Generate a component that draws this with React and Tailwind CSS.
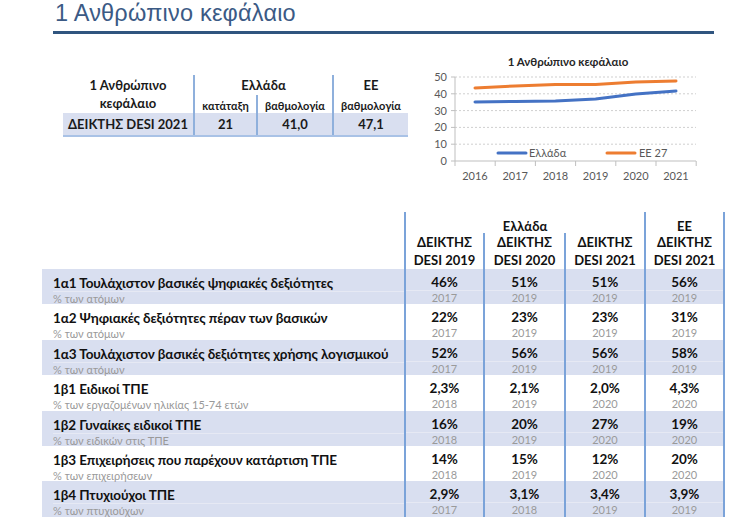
import React from "react";

const rows = [
  {
    title: "1α1 Τουλάχιστον βασικές ψηφιακές δεξιότητες",
    sub: "% των ατόμων",
    vals: [["46%", "2017"], ["51%", "2019"], ["51%", "2019"], ["56%", "2019"]],
  },
  {
    title: "1α2 Ψηφιακές δεξιότητες πέραν των βασικών",
    sub: "% των ατόμων",
    vals: [["22%", "2017"], ["23%", "2019"], ["23%", "2019"], ["31%", "2019"]],
  },
  {
    title: "1α3 Τουλάχιστον βασικές δεξιότητες χρήσης λογισμικού",
    sub: "% των ατόμων",
    vals: [["52%", "2017"], ["56%", "2019"], ["56%", "2019"], ["58%", "2019"]],
  },
  {
    title: "1β1 Ειδικοί ΤΠΕ",
    sub: "% των εργαζομένων ηλικίας 15-74 ετών",
    vals: [["2,3%", "2018"], ["2,1%", "2019"], ["2,0%", "2020"], ["4,3%", "2020"]],
  },
  {
    title: "1β2 Γυναίκες ειδικοί ΤΠΕ",
    sub: "% των ειδικών στις ΤΠΕ",
    vals: [["16%", "2018"], ["20%", "2019"], ["27%", "2020"], ["19%", "2020"]],
  },
  {
    title: "1β3 Επιχειρήσεις που παρέχουν κατάρτιση ΤΠΕ",
    sub: "% των επιχειρήσεων",
    vals: [["14%", "2018"], ["15%", "2019"], ["12%", "2020"], ["20%", "2020"]],
  },
  {
    title: "1β4 Πτυχιούχοι ΤΠΕ",
    sub: "% των πτυχιούχων",
    vals: [["2,9%", "2017"], ["3,1%", "2018"], ["3,4%", "2019"], ["3,9%", "2019"]],
  },
];

const years = ["2016", "2017", "2018", "2019", "2020", "2021"];
const greece = [102, 101.5, 101, 99, 94, 91];
const eu = [88, 86, 84.5, 84.5, 82, 81];
const cx = (i) => 475 + i * 40.2;

const toPath = (ys) =>
  ys.map((y, i) => `${i === 0 ? "M" : "L"}${cx(i)} ${y}`).join(" ");

const Chart = () => {
  const grid = [0, 10, 20, 30, 40, 50];
  return (
    <svg width="330" height="150" viewBox="420 45 330 150" className="block">
      <text
        x="568"
        y="66"
        textAnchor="middle"
        fontSize="11.5"
        fontWeight="700"
        fill="#262626"
        fontFamily="Lato, sans-serif"
      >
        1 Ανθρώπινο κεφάλαιο
      </text>
      {grid.map((v) => {
        const y = 161 - v * 1.68;
        return (
          <g key={v}>
            <line
              x1="455"
              x2="696"
              y1={y}
              y2={y}
              stroke={v === 0 ? "#bfbfbf" : "#cfcfcf"}
              strokeDasharray={v === 0 ? "" : "2 2"}
            />
            <line x1="451" x2="455" y1={y} y2={y} stroke="#bfbfbf" />
            <text
              x="447"
              y={y + 4}
              textAnchor="end"
              fontSize="11"
              fill="#595959"
              fontFamily="Lato, sans-serif"
            >
              {v}
            </text>
          </g>
        );
      })}
      <line x1="455" x2="455" y1="77" y2="161" stroke="#bfbfbf" />
      {[0, 1, 2, 3, 4, 5, 6].map((i) => (
        <line
          key={i}
          x1={455 + i * 40.2}
          x2={455 + i * 40.2}
          y1="161"
          y2="166"
          stroke="#bfbfbf"
        />
      ))}
      {years.map((y, i) => (
        <text
          key={y}
          x={cx(i)}
          y="180"
          textAnchor="middle"
          fontSize="11"
          fill="#595959"
          fontFamily="Lato, sans-serif"
        >
          {y}
        </text>
      ))}
      <path d={toPath(eu)} fill="none" stroke="#ed7d31" strokeWidth="3" strokeLinecap="round" strokeLinejoin="round" />
      <path d={toPath(greece)} fill="none" stroke="#4472c4" strokeWidth="3" strokeLinecap="round" strokeLinejoin="round" />
      <line x1="498" x2="526" y1="153" y2="153" stroke="#4472c4" strokeWidth="3" strokeLinecap="round" />
      <text x="529" y="157" fontSize="11" fill="#595959" fontFamily="Lato, sans-serif">
        Ελλάδα
      </text>
      <line x1="607" x2="635" y1="153" y2="153" stroke="#ed7d31" strokeWidth="3" strokeLinecap="round" />
      <text x="639" y="157" fontSize="11" fill="#595959" fontFamily="Lato, sans-serif">
        EE 27
      </text>
    </svg>
  );
};

const SmallTable = () => (
  <div className="grid grid-cols-[130px_63px_76px_76px] grid-rows-[20px_18px_24px] text-[#1a1a1a] font-bold">
    <div className="row-span-2 flex flex-col items-center pt-[1px] text-[13px] leading-[18px]">
      <span>1 Ανθρώπινο</span>
      <span>κεφάλαιο</span>
    </div>
    <div className="col-span-2 border-l-2 border-[#8fb0dc] text-center text-[13px] leading-[20px]">
      Ελλάδα
    </div>
    <div className="border-l-2 border-[#8fb0dc] text-center text-[13px] leading-[20px]">EE</div>
    <div className="border-l-2 border-[#8fb0dc] text-center text-[11px] leading-[18px] pt-[2px]">κατάταξη</div>
    <div className="border-l-2 border-[#8fb0dc] text-center text-[11px] leading-[18px] pt-[2px]">βαθμολογία</div>
    <div className="border-l-2 border-[#8fb0dc] text-center text-[11px] leading-[18px] pt-[2px]">βαθμολογία</div>
    <div className="col-span-4 grid grid-cols-[130px_63px_76px_76px] bg-[#d9dff0] border-b-2 border-[#a9c2e6] text-[13px] leading-[22px]">
      <div className="text-center">ΔΕΙΚΤΗΣ DESI 2021</div>
      <div className="border-l-2 border-[#8fb0dc] text-center">21</div>
      <div className="border-l-2 border-[#8fb0dc] text-center">41,0</div>
      <div className="border-l-2 border-[#8fb0dc] text-center">47,1</div>
    </div>
  </div>
);

const colLine = "border-l-2 border-[#7ba3d9]";

const MainTable = () => (
  <div className="w-[683px] text-[#111]">
    <div className="grid grid-cols-[362px_79px_81px_80px_81px] grid-rows-[21px_36px] font-bold text-[13px]">
      <div className="row-span-2" />
      <div className={`col-span-3 ${colLine} text-center leading-[18px] pt-[5px]`}>Ελλάδα</div>
      <div className={`${colLine} border-r-2 text-center leading-[18px] pt-[5px]`}>EE</div>
      {["DESI 2019", "DESI 2020", "DESI 2021", "DESI 2021"].map((t, i) => (
        <div
          key={i}
          className={`${colLine} ${i === 3 ? "border-r-2" : ""} flex flex-col items-center leading-[17.5px] pt-[1px]`}
        >
          <span>ΔΕΙΚΤΗΣ</span>
          <span>{t}</span>
        </div>
      ))}
    </div>
    {rows.map((r, ri) => {
      const shaded = ri % 2 === 0;
      const sep = shaded ? "border-[#e6e9f4]" : "border-transparent";
      return (
        <div
          key={ri}
          className={`grid grid-cols-[362px_79px_81px_80px_81px] h-[35.4px] ${shaded ? "bg-[#d9dff0]" : "bg-white"}`}
        >
          <div className="flex flex-col pl-[11px]">
            <div className="pt-[6px] text-[13.5px] tracking-[-0.1px] font-bold leading-[16px] whitespace-nowrap">
              {r.title}
            </div>
            <div className={`border-t ${sep} text-[11px] leading-[12px] pt-[1px] text-[#999]`}>{r.sub}</div>
          </div>
          {r.vals.map(([v, y], i) => (
            <div key={i} className={`${colLine} ${i === 3 ? "border-r-2" : ""} flex flex-col items-center`}>
              <div className="pt-[5px] text-[13.5px] font-bold leading-[16px]">{v}</div>
              <div className={`w-full border-t ${sep} text-center text-[11px] leading-[13px] text-[#9a9a9a]`}>{y}</div>
            </div>
          ))}
        </div>
      );
    })}
  </div>
);

export default function App() {
  return (
    <div className="w-[750px] h-[532px] overflow-hidden bg-white font-['Lato','Noto_Sans',sans-serif]">
      <div className="ml-[53px] w-[661px] h-[34px] border-b-[3px] border-[#30557f]">
        <h1 className="pl-[2px] text-[23.5px] tracking-[0.2px] leading-[27px] text-[#3b5a85] font-['Liberation_Sans','Arial',sans-serif]">
          1 Ανθρώπινο κεφάλαιο
        </h1>
      </div>
      <div className="flex items-start">
        <div className="ml-[63px] mt-[41px]">
          <SmallTable />
        </div>
        <div className="ml-[12px] mt-[11px]">
          <Chart />
        </div>
      </div>
      <div className="ml-[42px] mt-[17px]">
        <MainTable />
      </div>
    </div>
  );
}
